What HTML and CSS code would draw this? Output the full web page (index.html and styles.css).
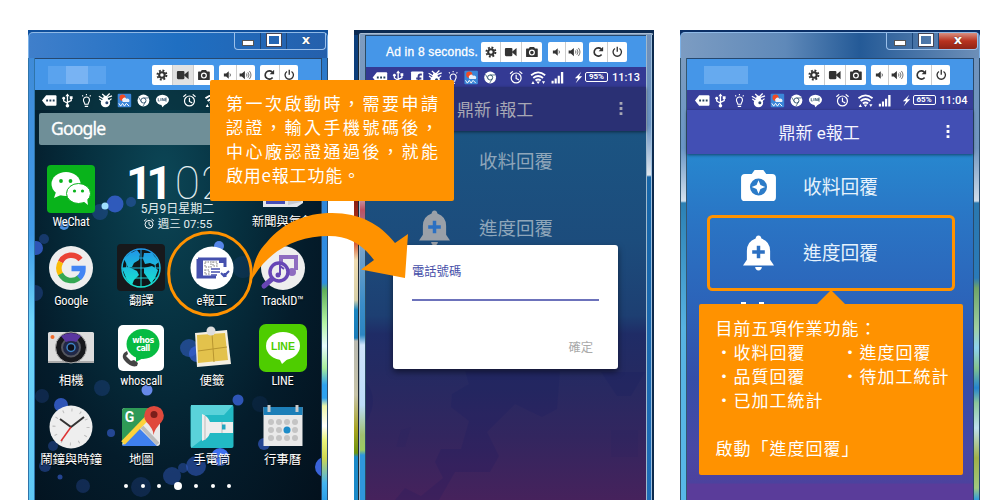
FILE: index.html
```
<!DOCTYPE html>
<html lang="zh-TW">
<head>
<meta charset="utf-8">
<title>e報工</title>
<link rel="stylesheet" href="styles.css">
</head>
<body>
<svg class="defs" width="0" height="0">
  <symbol id="gear" viewBox="0 0 16 16"><circle cx="8" cy="8" r="3.7" fill="none" stroke="#333" stroke-width="2.8"/><circle cx="8" cy="8" r="6" fill="none" stroke="#333" stroke-width="2.6" stroke-dasharray="2.5 2.21"/></symbol>
  <symbol id="video" viewBox="0 0 16 16"><rect x="0" y="2.500" width="10" height="11" rx="1.5" fill="#333"/><path d="M9 8l6.500-5.500v11z" fill="#333"/></symbol>
  <symbol id="cam" viewBox="0 0 16 16"><path d="M1 4h3.500l1-2h5l1 2H15v10H1z" fill="#333" stroke="#333" stroke-width="1.500" stroke-linejoin="round"/><circle cx="8" cy="8.800" r="3.200" fill="none" stroke="#fff" stroke-width="1.600"/></symbol>
  <symbol id="vol1" viewBox="0 0 16 16"><path d="M3 6h3l3.500-3v10L6 10H3z" fill="#333"/><path d="M11 6q1.600 2 0 4" fill="none" stroke="#555" stroke-width="1.200"/></symbol>
  <symbol id="vol2" viewBox="0 0 16 16"><path d="M0 6h3l4-3.500v11L3 10H0z" fill="#333"/><path d="M9 6q1.600 2 0 4M11 4.300q3 3.700 0 7.400M13 2.600q4.300 5.400 0 10.800" fill="none" stroke="#666" stroke-width="1.200"/></symbol>
  <symbol id="redo" viewBox="0 0 16 16"><path d="M12.500 11.300A5.500 5.500 0 1 1 12 4.200" fill="none" stroke="#333" stroke-width="2.200"/><path d="M14.500 1v6h-6z" fill="#333"/></symbol>
  <symbol id="power" viewBox="0 0 16 16"><path d="M5 3.300a5.600 5.600 0 1 0 6 0M8 1v6.500" fill="none" stroke="#333" stroke-width="1.800"/></symbol>

  <symbol id="msg" viewBox="0 0 16 16"><path d="M4.500 2.500h10q1 0 1 1v9q0 1-1 1h-10L0 8z" fill="#fff"/><path d="M4.500 7h2v2h-2zM8 7h2v2H8zM11.500 7h2v2h-2z" fill="#23405a"/></symbol>
  <symbol id="usb" viewBox="0 0 16 16"><path d="M8 2v11M8 11L4 8.500V5.500M8 10l4-2V5" fill="none" stroke="#fff" stroke-width="1.400"/><path d="M5.800 3.500L8 .5l2.200 3zM10.500 3.500h3v3h-3z" fill="#fff"/><circle cx="4" cy="5.500" r="1.500" fill="#fff"/><circle cx="8" cy="13.500" r="1.900" fill="#fff"/></symbol>
  <symbol id="bulb" viewBox="0 0 16 16"><path d="M6.300 12C6 10 4.800 9.500 4.800 7.500a3.200 3.200 0 0 1 6.400 0C11.200 9.500 10 10 9.700 12zM6.200 14.300h3.600M8 1v1.500M3.500 2.500l1 1M12.500 2.500l-1 1" fill="none" stroke="#fff" stroke-width="1.200"/></symbol>
  <symbol id="bug" viewBox="0 0 16 16"><ellipse cx="8" cy="10.500" rx="5" ry="4.700" fill="#fff"/><circle cx="8" cy="5.500" r="2.600" fill="#fff"/><path d="M1.500 6.500L5 9M14.500 6L11 9M1 3.500l5 3M4.500 1L8 4M12.500 .5L9 4M10 5l5-2" stroke="#fff" stroke-width="1.300"/><circle cx="9.500" cy="10.500" r="1.600" fill="#2c4671"/></symbol>
  <symbol id="wx" viewBox="0 0 16 16"><rect x=".8" y=".8" width="14.400" height="14.400" rx="1" fill="#3b86d8"/><circle cx="6" cy="5" r="3.300" fill="#f04b24"/><path d="M6 9a2.200 2.200 0 0 1 4-3 2.400 2.400 0 0 1 3 3.500H6z" fill="#e8effa"/><path d="M2 11l2 3 2-3 2 3 2-3 3 3" fill="none" stroke="#fff"/></symbol>
  <symbol id="chrome" viewBox="0 0 16 16"><circle cx="8" cy="8" r="6.300" fill="#fff"/><circle cx="8" cy="8" r="2.700" fill="none" stroke="#31536d" stroke-width="1"/><path d="M8 5.300h5.500M5.700 9.300L3 4.700M10.300 9.300L7.500 14" stroke="#31536d" stroke-width=".8"/></symbol>
  <symbol id="lin" viewBox="0 0 16 16"><ellipse cx="8" cy="7.300" rx="7" ry="5.500" fill="#fff"/><path d="M6.500 12l1.500 3.300 4-4.300z" fill="#fff"/><path d="M3.500 5.500v3H5M6.300 5.500v3M7.800 8.500v-3l2 3v-3M12.700 5.500H11v3h1.700M11 7h1.500" fill="none" stroke="#31536d" stroke-width=".8"/></symbol>
  <symbol id="fb" viewBox="0 0 16 16"><rect x="1.500" y="1.500" width="13" height="13" rx="1" fill="#fff"/><path d="M9.500 15V7q0-2.200 2-2.200h1.500M7 9h5.500" fill="none" stroke="#3a3c8c" stroke-width="2"/></symbol>
  <symbol id="alarm" viewBox="0 0 16 16"><circle cx="8" cy="8.500" r="5.300" fill="none" stroke="#fff" stroke-width="1.300"/><path d="M8 5v4l3 1.500M1.500 4l3-2.500M14.500 4l-3-2.500" fill="none" stroke="#fff" stroke-width="1.300"/></symbol>
  <symbol id="wifi" viewBox="0 0 16 16"><path d="M.5 5.500Q8-.5 15.500 5.500M2.800 8.500Q8 4.300 13.200 8.500M5.200 11.300Q8 9 10.800 11.300" fill="none" stroke="#fff" stroke-width="2"/><path d="M6 12.300h4l-2 2.500zM.8 14.800l1.700-3 1.700 3zM12 12h3.400l-1.700 3z" fill="#fff"/></symbol>
  <symbol id="sig" viewBox="0 0 16 16"><path d="M2 14.500v-3h2.300v3zM5.300 14.500V9h2.300v5.500zM8.600 14.500V6h2.300v8.500zM12 14.500V2h2.500v12.500z" fill="#fff"/></symbol>
  <symbol id="bolt" viewBox="0 0 16 16"><path d="M11.500 1L3.500 9H7.500l-3 6L12.500 6.500H8.500z" fill="#fff"/></symbol>
  <symbol id="dots" viewBox="0 0 4 16"><path d="M.5 1h3v3h-3zM.5 6.500h3v3h-3zM.5 12h3v3h-3z"/></symbol>
  <symbol id="bell" viewBox="0 0 32 36"><path d="M16 0q2.500 0 3 3Q28 6 28 16v9l4 6H0l4-6v-9Q4 6 13 3q.5-3 3-3z"/><path d="M12.500 32.500h7q-.5 3.500-3.500 3.500t-3.500-3.500z"/><path class="cut" d="M9.500 17h13M16 10.500v13" stroke-width="3.600"/></symbol>
  <symbol id="shot" viewBox="0 0 36 32"><path d="M4 4h7l3-4h9l3 4h6q4 0 4 4v20q0 4-4 4H4q-4 0-4-4V8q0-4 4-4z"/><circle class="cutfill" cx="18" cy="17.500" r="8.800"/><path d="M18 10.500l2 5 5 2-5 2-2 5-2-5-5-2 5-2z"/></symbol>
</svg>

<main class="stage">
  <section class="win win-home">
    <header class="titlebar"><div class="ctl"><i class="min"></i><i class="max"></i><i class="cls">x</i></div></header>
    <div class="edge edge-l"></div>
    <div class="screen home">
      <div class="toolbar"><div class="blurname"><i></i><i></i><i></i></div>
        <div class="grp g3"><svg><use href="#gear"/></svg><svg class="on"><use href="#video"/></svg><svg><use href="#cam"/></svg></div>
        <div class="grp g2"><svg><use href="#vol1"/></svg><svg><use href="#vol2"/></svg></div>
        <div class="grp g2 w"><svg><use href="#redo"/></svg><svg><use href="#power"/></svg></div>
      </div>
      <div class="launcher">
        <svg class="wall bokeh" viewBox="34 90 287 410" width="287" height="410">
          <g fill="#3a63d8">
            <circle cx="114" cy="204" r="8.500" opacity=".8"/><circle cx="99" cy="212" r="8" opacity=".3"/><circle cx="130" cy="202" r="5" opacity=".4"/><circle cx="104" cy="206" r="3.500" fill="#9fe0ff"/>
            <circle cx="63" cy="225" r="5" fill="#4a8fe0"/><circle cx="43" cy="239" r="5" opacity=".35"/><circle cx="35" cy="248" r="7" opacity=".8"/><circle cx="34" cy="293" r="8" opacity=".3"/><circle cx="218" cy="246" r="5" fill="#5585e8"/><circle cx="242" cy="267" r="11" opacity=".12"/>
            <circle cx="188" cy="348" r="9" opacity=".5"/><circle cx="196" cy="354" r="8" opacity=".7"/><circle cx="101" cy="388" r="8" opacity=".22"/><circle cx="146" cy="390" r="5.500" fill="#6688e8"/><circle cx="60" cy="405" r="7" opacity=".8"/><circle cx="41" cy="396" r="7" opacity=".2"/><circle cx="237" cy="400" r="5.500" opacity=".8"/><circle cx="259" cy="404" r="8" opacity=".1"/><circle cx="110" cy="433" r="4" opacity=".6"/><circle cx="52" cy="446" r="5" opacity=".35"/><circle cx="44" cy="466" r="6" opacity=".4"/>
            <circle cx="195" cy="466" r="10" opacity=".5"/><circle cx="182" cy="468" r="5" opacity=".4"/><circle cx="171" cy="476" r="9" opacity=".4"/><circle cx="82" cy="486" r="7" opacity=".25"/><circle cx="140" cy="487" r="10" opacity=".2"/><circle cx="219" cy="457" r="9" fill="#3f70f0"/><circle cx="263" cy="444" r="6" opacity=".6"/><circle cx="324" cy="467" r="10"/><circle cx="59" cy="477" r="2.500" opacity=".6"/>
          </g>
        </svg>
        <div class="status"><svg><use href="#msg"/></svg><svg><use href="#usb"/></svg><svg><use href="#bulb"/></svg><svg><use href="#bug"/></svg><svg><use href="#wx"/></svg><svg><use href="#chrome"/></svg><svg><use href="#lin"/></svg><svg class="al"><use href="#alarm"/></svg><svg class="wf"><use href="#wifi"/></svg></div>
        <div class="search">Google</div>
        <div class="apps">
          <div class="app"><svg viewBox="0 0 48 48"><rect width="48" height="48" rx="4" fill="#09b31b"/><ellipse cx="19" cy="19" rx="14.500" ry="12" fill="#fff"/><path d="M9 27l-2 6 7-3z" fill="#fff"/><ellipse cx="31.500" cy="28.500" rx="12" ry="10" fill="#fff" stroke="#09b31b"/><path d="M36 36l5 4-1-7z" fill="#fff"/><g fill="#09b31b"><circle cx="14" cy="16" r="1.900"/><circle cx="23.500" cy="16" r="1.900"/><circle cx="27.500" cy="26" r="1.600"/><circle cx="35.500" cy="26" r="1.600"/></g></svg><span>WeChat</span></div>
          <div class="clock"><div class="time"><b>11</b><i>02</i></div><p>5月9日星期二</p><p class="al2"><svg><use href="#alarm"/></svg>週三 07:55</p></div>
          <div class="app"><svg viewBox="0 0 48 48"><path d="M4 8h40v30l-6 4H4z" fill="#e4e6ea"/><path d="M7 8h19v31H7z" fill="#464fb5"/><path d="M29 31l13-3v9l-13 3z" fill="#c7cad2"/></svg><span>新聞與氣象</span></div>

          <div class="app"><svg viewBox="0 0 48 48"><circle cx="24" cy="24" r="22" fill="#eee"/><g fill="none" stroke-width="5.500"><path d="M33.500 15.500A12 12 0 0 0 13.500 18" stroke="#ea4335"/><path d="M13.700 18a12 12 0 0 0 0 12.500" stroke="#fbbc05"/><path d="M13.500 30a12 12 0 0 0 19 3.200" stroke="#34a853"/><path d="M32 34q4.200-4 4-9.500H24.500" stroke="#4285f4"/></g></svg><span>Google</span></div>
          <div class="app"><svg viewBox="0 0 48 48"><defs><linearGradient id="gl" x2="0" y2="1"><stop stop-color="#2196e8"/><stop offset="1" stop-color="#16e4d0"/></linearGradient></defs><rect width="48" height="47" rx="4" fill="#17181b"/><circle cx="24" cy="24" r="19" fill="#101719" stroke="url(#gl)" stroke-width="1.500"/><path d="M7 15l5-5 8-4 3 4-1 6-5 3-2 4-4 0zM5 24l7-1 8 4 2 4-5 5-2 5-5-5zM27 9l8 0 7 9-4 3-5-2-5 1-2-5zM27 24l8-2 6 4-3 8-4 5-4-6-3-4z" fill="url(#gl)"/><path d="M24 5v38M5 24h38M14 8q-9 16 0 32M34 8q9 16 0 32M8 14h32M8 34h32" fill="none" stroke="url(#gl)"/></svg><span>翻譯</span></div>
          <div class="app"><svg viewBox="0 0 48 48"><circle cx="24" cy="24" r="21.500" fill="#fff"/><path d="M10 15h27v8M37 29v4M10 15v18h18" fill="none" stroke="#4550ae" stroke-width="3"/><path d="M11 15h4v18h-4zM31 14h6v5h-6z" fill="#4550ae"/><path d="M17 18h6v5h-6zM25 18h4v4h-4zM17 26h4v4h-4z" fill="none" stroke="#aaa" stroke-width="1.500" stroke-dasharray="1.500 1"/><path d="M23 25h9M23 28h9M23 31h6" stroke="#4550ae" stroke-width="1.500"/><path d="M33 29l3 3 5-5" fill="none" stroke="#4550ae" stroke-width="2"/></svg><span>e報工</span></div>
          <div class="app"><svg viewBox="0 0 48 48"><circle cx="24" cy="24" r="22" fill="#eee"/><path d="M22 18v-5h15v13" fill="none" stroke="#8e6cc0" stroke-width="4"/><circle cx="33" cy="28" r="4" fill="#8e6cc0"/><circle cx="20" cy="28" r="9" fill="#eee" stroke="#6746b5" stroke-width="3.500"/><path d="M13 35l-8 7" stroke="#6746b5" stroke-width="5" stroke-linecap="round"/><path d="M21 31v-9l4 3" fill="none" stroke="#6746b5" stroke-width="2"/><circle cx="19" cy="31" r="2.500" fill="#6746b5"/></svg><span>TrackID™</span></div>

          <div class="app"><svg viewBox="0 0 48 48"><rect x="1" y="8" width="46" height="31" rx="1.500" fill="#ddd"/><rect x="1" y="37" width="46" height="2" fill="#aaa"/><circle cx="5.500" cy="13" r="2" fill="#f06a2a"/><circle cx="24" cy="23.500" r="15.500" fill="#17181c" stroke="#aaa"/><circle cx="24" cy="23.500" r="9" fill="#202746" stroke="#54565f" stroke-width="2"/><path d="M14 12q10-6 20 0l-5 6q-5-2-10 0z" fill="#5a36a0"/><circle cx="24" cy="23.500" r="4" fill="#0d101a" stroke="#3e83c4" stroke-width="1.500"/></svg><span>相機</span></div>
          <div class="app"><svg viewBox="0 0 48 48"><rect x="1" y="1" width="46" height="46" rx="5" fill="#fff"/><ellipse cx="26" cy="20" rx="16.500" ry="15" fill="#07bb42"/><path d="M19 31l0 7 9-5z" fill="#07bb42"/><path d="M7 29q-3 4 1 8 6 7 12 5l1-3-4-3-3 1-5-5 2-2-1-3z" fill="#444"/><text class="wc" x="26" y="19">whos</text><text class="wc" x="26" y="27">call</text></svg><span>whoscall</span></div>
          <div class="app"><svg viewBox="0 0 48 48"><path d="M7 9l32-3 4 34-34 3z" fill="#f4efe2"/><path d="M9 11l28-2 3 27-30 3z" fill="#e3c24c"/><path d="M24 10l2 28M10 27l29-4" stroke="#b99630"/><circle cx="23" cy="7" r="4.500" fill="#ddd"/></svg><span>便籤</span></div>
          <div class="app"><svg viewBox="0 0 48 48"><rect width="48" height="48" rx="7" fill="#4ecd00"/><ellipse cx="24" cy="22" rx="17" ry="14" fill="#fff"/><path d="M20 34l3 6 9-8z" fill="#fff"/><text class="ln" x="24" y="26">LINE</text></svg><span>LINE</span></div>

          <div class="app"><svg viewBox="0 0 48 48"><circle cx="24" cy="24" r="21.500" fill="#eee"/><circle cx="24" cy="24" r="17" fill="none" stroke="#bbb" stroke-width="3" stroke-dasharray="1 7.900"/><path d="M13 16l11 8 13-10" fill="none" stroke="#333" stroke-width="2"/><path d="M24 24L14 38" stroke="#d33" stroke-width="1.500"/></svg><span>鬧鐘與時鐘</span></div>
          <div class="app"><svg viewBox="0 0 48 48"><rect x="5" y="5" width="38" height="38" rx="3" fill="#eaeaea"/><path d="M5 41V8q0-3 3-3h25v8z" fill="#2f9a56"/><path d="M5 43L22 25l18 18z" fill="#3f80ee"/><path d="M6 40L33 12" stroke="#fdd23c" stroke-width="5"/><path d="M25 24l16 17" stroke="#bbb" stroke-width="4"/><path d="M36.500 32q0-6-7-13a9.800 9.800 0 1 1 15 0q-7 7-8 13z" fill="#e0493c"/><circle cx="37" cy="11.500" r="3.500" fill="#7b1e1a"/><text class="mg" x="12.500" y="19">G</text></svg><span>地圖</span></div>
          <div class="app"><svg viewBox="0 0 48 48"><rect x="2.500" y="2" width="43" height="43" rx="2" fill="#22b9c4"/><path d="M3 2l13 10v23L3 45zM16 12h20l9-10H3z" fill="#5ad2da"/><path d="M14 11q6 2 8 8h23v11H22q-2 6-8 8z" fill="#eee"/><path d="M17 13v24M34 19v11" stroke="#bbb"/><rect x="34" y="21.500" width="3.500" height="5" fill="#22a6c0"/></svg><span>手電筒</span></div>
          <div class="app"><svg viewBox="0 0 48 48"><rect x="4.500" y="4" width="39" height="39" fill="#e9e9e9"/><rect x="4.500" y="4" width="39" height="8" fill="#1d7fb8"/><path d="M10 2v7M38 2v7" stroke="#ccc" stroke-width="3"/><g fill="#c4c4c4"><circle cx="12" cy="19" r="3"/><circle cx="20" cy="19" r="3"/><circle cx="28" cy="19" r="3"/><circle cx="36" cy="19" r="3"/><circle cx="12" cy="27" r="3"/><circle cx="20" cy="27" r="3"/><circle cx="36" cy="27" r="3"/><circle cx="12" cy="35" r="3"/><circle cx="20" cy="35" r="3"/><circle cx="28" cy="35" r="3"/><circle cx="36" cy="35" r="3"/></g><circle cx="28" cy="27" r="3.500" fill="#1d8cc8"/></svg><span>行事曆</span></div>
        </div>
        <div class="pager"><i></i><i></i><i></i><i class="cur"></i><i></i><i></i><i></i></div>
      </div>
    </div>
    <div class="edge edge-r"></div>
  </section>

  <section class="win win-login">
    <header class="topline"></header>
    <div class="edge edge-l"></div>
    <div class="screen">
      <div class="toolbar"><div class="ad">Ad in 8 seconds.</div>
        <div class="grp g3"><svg><use href="#gear"/></svg><svg><use href="#video"/></svg><svg><use href="#cam"/></svg></div>
        <div class="grp g2"><svg><use href="#vol1"/></svg><svg><use href="#vol2"/></svg></div>
        <div class="grp g2 w"><svg><use href="#redo"/></svg><svg><use href="#power"/></svg></div>
      </div>
      <div class="status"><svg><use href="#msg"/></svg><svg><use href="#usb"/></svg><svg><use href="#fb"/></svg><svg><use href="#bug"/></svg><svg><use href="#bulb"/></svg><svg><use href="#wx"/></svg><svg><use href="#chrome"/></svg><svg class="al"><use href="#alarm"/></svg><svg class="wf"><use href="#wifi"/></svg><svg><use href="#sig"/></svg><svg class="bo"><use href="#bolt"/></svg><em>95%</em><time>11:13</time></div>
      <div class="appbar"><span>鼎新 i報工</span><svg><use href="#dots"/></svg></div>
      <div class="body">
        <svg class="wall" viewBox="365 131 281 369" width="281" height="369"><g fill="#0c1560" opacity=".14"><path d="M464 371h95l-3 38-15 8-27-13-28 28 12 24-9 16h-35l-16 28h-44l10-12 16 8 22-18-8-16 6-13h20l8-28-18-14 1-13 17-10z"/><path d="M600 372h44l-14 24h-14z"/><path d="M365 382q14 18 0 40z"/><path d="M610 430h27v27h-27zM400 430l10-3-6 20h-9z" opacity=".4"/></g></svg>
        <div class="row"><span class="ico"></span><span>收料回覆</span></div>
        <div class="row"><span class="ico"><svg class="bell"><use href="#bell"/></svg></span><span>進度回覆</span></div>
        <div class="dialog"><label>電話號碼</label><div class="line"></div><div class="ok">確定</div></div>
      </div>
    </div>
    <div class="edge edge-r"></div>
  </section>

  <section class="win win-menu">
    <header class="titlebar"><div class="ctl"><i class="min"></i><i class="max"></i><i class="cls">x</i></div></header>
    <div class="edge edge-l"></div>
    <div class="screen">
      <div class="toolbar"><div class="blurname"><i></i></div>
        <div class="grp g3"><svg><use href="#gear"/></svg><svg><use href="#video"/></svg><svg><use href="#cam"/></svg></div>
        <div class="grp g2"><svg><use href="#vol1"/></svg><svg><use href="#vol2"/></svg></div>
        <div class="grp g2 w"><svg><use href="#redo"/></svg><svg><use href="#power"/></svg></div>
      </div>
      <div class="status"><svg><use href="#msg"/></svg><svg><use href="#usb"/></svg><svg><use href="#bulb"/></svg><svg><use href="#bug"/></svg><svg><use href="#wx"/></svg><svg><use href="#chrome"/></svg><svg><use href="#lin"/></svg><svg class="al"><use href="#alarm"/></svg><svg class="wf"><use href="#wifi"/></svg><svg><use href="#sig"/></svg><svg class="bo"><use href="#bolt"/></svg><em>65%</em><time>11:04</time></div>
      <div class="appbar"><span>鼎新 e報工</span><svg><use href="#dots"/></svg></div>
      <div class="body">
        <div class="row"><span class="ico"><svg class="shot"><use href="#shot"/></svg></span><span>收料回覆</span></div>
        <div class="row"><span class="ico"><svg class="bell"><use href="#bell"/></svg></span><span>進度回覆</span></div>
        <div class="row peek"><span class="ico"><i></i><i></i></span></div>
      </div>
    </div>
    <div class="edge edge-r"></div>
  </section>

  <svg class="marks" viewBox="0 0 1000 500" width="1000" height="500">
    <circle cx="210" cy="273.700" r="41.300" fill="none" stroke="#ff9200" stroke-width="3"/>
    <path d="M251.500 280C253 262 258 251 267 242C283 223 305 213 332 213C360 213 380 224 395 243L408 234L405 278L361 269.500L374 260C362 244 348 236 329 236C296 236 269 250 251.500 280z" fill="#ff9200"/>
    <rect x="708.500" y="216.500" width="245" height="73" rx="4" fill="none" stroke="#ff9200" stroke-width="3"/>
    <path d="M831 290l14 14h-28z" fill="#ff9200"/>
  </svg>
  <aside class="note note-auth"><p>第一次啟動時，需要申請</p><p>認證，輸入手機號碼後，</p><p>中心廠認證通過後，就能</p><p class="last">啟用e報工功能。</p></aside>
  <aside class="note note-list"><p>目前五項作業功能：</p><div class="cols"><p>・收料回覆</p><p>・進度回覆</p><p>・品質回覆</p><p>・待加工統計</p><p>・已加工統計</p></div><p class="go">啟動「進度回覆」</p></aside>
</main>
</body>
</html>
```
FILE: styles.css
```
* { box-sizing: border-box; margin: 0; padding: 0; }
body { width: 1000px; height: 500px; overflow: hidden; background: #fff; font-family: Roboto, "Noto Sans CJK TC", sans-serif; }
i, em { font-style: normal; }
.defs { position: absolute; }
.stage { position: relative; width: 1000px; height: 500px; overflow: hidden; display: flex; gap: 26px; padding: 30px 0 0 28px; }

/* desktop window frames */
.win { width: 300px; height: 470px; display: grid; grid-template-columns: 7px 1fr 7px; grid-template-rows: 28px 1fr; background: #0f4f9c; flex: none; }
.titlebar { grid-column: 1 / 4; border: 1px solid #7db2e8; border-top-color: #8fb9e6; border-bottom: 0; border-radius: 5px 5px 0 0; margin-top: 2px; display: flex; justify-content: flex-end; background: linear-gradient(90deg, #3f7fcb, #1f6fc2 50%, #2560ac); }
.win-menu { grid-template-columns: 7px 286px 7px; background: #0b2f66; }
.win-menu .titlebar { background: linear-gradient(90deg, #7c9cc2, #5f89b9 35%, #245a97 60%, #6d8fb8); }
.ctl { display: flex; width: 92px; height: 17px; margin-right: 1px; border: 1px solid #9cc0ea; border-top: 0; border-radius: 0 0 4px 4px; overflow: hidden; }
.ctl i { flex: 0 0 26px; display: flex; align-items: center; justify-content: center; border-right: 1px solid #1c4679; }
.ctl .cls { flex: 1; border: 0; color: #fff; font: bold 13px/14px "DejaVu Sans", sans-serif; padding-bottom: 2px; text-shadow: 0 0 1px #222; }
.win-menu .cls { background: linear-gradient(#d98f80, #b8321f 50%, #8e2418); }
.min::before { content: ""; width: 10px; height: 4px; background: #fff; border: 1px solid #555; margin-top: 3px; }
.max::before { content: ""; width: 10px; height: 8px; border: 2px solid #fff; outline: 1px solid #445; margin-bottom: 2px; }
.screen { min-width: 0; height: 442px; display: flex; flex-direction: column; border-top: 1px solid #26486f; }
.edge { border: solid #2a4a6b; border-width: 0 1px; }
.win-home .edge-l { background: linear-gradient(#3f8bd8, #3f9ae8 40%, #6fd6fb 60%, #5fc8f5); border-color: #2f74a9; }
.win-home .edge-r { background: linear-gradient(#2b78c8, #2f8fe6 50%, #2f8fe0 225px, #5faf5a 232px, #b5f5a5 265px, #e8fbff 288px, #a9ee9c 310px, #2ea2f0 327px, #2ea2f0 340px, #eff7a8 348px, #fff 368px, #eaf57c 382px, #d0d850 400px, #45b4ef 425px, #2c9fe8); }

.win-login { grid-template-columns: 12px 280px 8px; grid-template-rows: 5px 1fr; background: #0b2a52; }
.topline { grid-column: 1 / 4; margin: 3px 1px 0 5px; background: #7f9cbd; border: 1px solid #a9bdd4; border-bottom: 0; border-radius: 4px 4px 0 0; }
.win-login .screen { height: 465px; }
.win-login .edge-l { border: 0; background: linear-gradient(90deg, transparent 4px, #1c2733 4px, #1c2733 5px, #a8bccf 5px, #a8bccf 6px, transparent 6px, transparent 11px, #2b4a63 11px), linear-gradient(#7e9cc0, #6890bd 120px, #c8d8e8 155px, #c05060 175px, #7aa5cc 210px, #3a8cc8 270px, #2c86c2 300px, #d0e4fb 310px, #bcdcf8 370px, #a0c070 400px, #9ccb60 415px, #2f97dc 420px) 6px 0 / 6px 100% no-repeat, linear-gradient(#0c3f7c, #0b3a78 145px, #7c1a14 160px, #d0401c 205px, #f0dcb0 225px, #d8d0a8 265px, #1b86c0 275px, #1b7cb8 303px, #b9b9b0 306px, #c8c4a8 360px, #a8a420 395px, #6c9410 418px, #1b8ac8 422px); }
.win-login .edge-r { border-left: 1px solid #9fb8cc; border-right: 2px solid #0c2a4e; background: linear-gradient(#6f8fb8, #6a93c2 90px, #dfe6ee 140px, #1766a8 142px, #1f6cb8); box-shadow: inset -1px 0 #9fc0de; }
.win-menu .edge-l { background: linear-gradient(#7c9cc0, #6996c6 90px, #d5e2ee 143px, #2b80b4 145px, #57b3e2 270px, #57b8e8); border-color: #355770; }
.win-menu .edge-r { background: linear-gradient(#6f93bd, #7196c0 90px, #cfdcea 143px, #2a78b0 145px, #2a7ab8 220px, #6fa468 230px, #a0cfa0 270px, #8fd2ee 290px, #83c48e 310px, #2484d0 330px, #8cc69a 345px, #bfe0ee 370px, #a0b048 400px, #a0c880 430px, #2d9be0); }

/* emulator toolbar */
.toolbar { flex: 0 0 31px; display: flex; gap: 5.500px; align-items: center; background: #4596e8; }
.grp { display: flex; height: 20px; background: #fff; border-radius: 2px; }
.g3 { width: 61.500px; }
.g2 { width: 35.500px; }
.g2.w { width: 38px; }
.grp svg { flex: 1; min-width: 0; height: 20px; padding: 4px 2px; border-right: 1px solid #ccc; }
.grp svg:last-child { border: 0; }
.grp svg.on { background: #e2e2e2; }
.blurname { display: flex; height: 18px; margin-left: 13px; width: 98.500px; }
.blurname i { width: 18px; background: #5aa3ee; }
.blurname i:nth-child(2) { width: 22px; background: #78b3f3; }
.win-menu .blurname { margin-left: 17px; width: 94.500px; }
.win-menu .blurname i { width: 44px; background: #66aaef; }
.ad { width: 109px; padding-left: 20px; color: #fff; font: 12px/16px "Liberation Sans", sans-serif; white-space: nowrap; letter-spacing: .2px; -webkit-text-stroke: .3px #fff; }

.status { flex: 0 0 20px; display: flex; align-items: center; padding-left: 5.500px; background: #373f9b; color: #fff; }
.status svg { flex: none; width: 18.900px; height: 15px; }
.status .al { margin-left: 8px; }
.status .wf { margin-left: 4px; width: 19px; }
.status .bo { width: 13px; margin-left: 6px; }
.status em { width: 23px; height: 10px; border: 1px solid #fff; border-radius: 2px; font-size: 8px; font-weight: bold; line-height: 8px; text-align: center; }
.status time { margin-left: 4px; font-size: 11px; font-weight: 500; }
.win-login .status { background: #343a94; padding-left: 5px; }
.win-login .status svg { width: 18.300px; }
.win-login .status .bo { width: 13px; }

/* phone home screen */
.launcher { position: relative; flex: 1; display: flex; flex-direction: column; background: radial-gradient(ellipse at 45% 22%, #0c4656 0, #06303f 35%, #041c2b 65%, #03111d 100%); overflow: hidden; }
.wall { position: absolute; inset: 0; }
.bokeh { filter: blur(.7px); }
.launcher .status { position: relative; background: rgba(10, 50, 62, .6); padding-left: 4.500px; }
.search { position: relative; margin: 3px 4px 0; height: 32px; background: #6f8f98; border-radius: 2px; color: #fff; font: 17.500px/30px "Noto Sans", sans-serif; padding-left: 12px; flex: none; letter-spacing: -.8px; -webkit-text-stroke: .3px #fff; }
.apps { position: relative; display: grid; grid-template-columns: 70px 70.500px 70.500px 71px; grid-auto-rows: 79.300px; margin: 20px 0 0 1px; }
.app { display: flex; flex-direction: column; align-items: center; }
.app svg { width: 48px; height: 48px; flex: none; }
.app span { font: 12.500px/18px "Roboto Condensed", Roboto, "Noto Sans CJK TC", sans-serif; color: #fff; white-space: nowrap; text-shadow: 0 1px 1px #000; letter-spacing: -.2px; }
.wc { font: bold 8px "DejaVu Sans", sans-serif; fill: #fff; text-anchor: middle; letter-spacing: -.5px; }
.ln { font: bold 10.500px "Liberation Sans", sans-serif; fill: #4ecd00; text-anchor: middle; }
.mg { font: bold 14px Roboto, sans-serif; fill: #fff; text-anchor: middle; }
.clock { grid-column: span 2; color: #e4eef0; text-align: center; }
.time { height: 37px; line-height: 37px; font-size: 46px; white-space: nowrap; }
.time b { font-weight: 700; letter-spacing: -6px; color: #fff; }
.time i { font-weight: 100; margin-left: 8px; letter-spacing: 1px; }
.clock p { font-size: 12px; line-height: 14.500px; padding-left: 2px; }
.clock .al2 { display: flex; justify-content: center; align-items: center; gap: 3px; font-size: 11.500px; }
.al2 svg { width: 12px; height: 12px; }
.pager { position: relative; display: flex; justify-content: space-between; align-items: center; width: 107px; height: 8px; margin: 0 0 0 89px; }
.pager i { width: 4px; height: 4px; border-radius: 50%; background: #fff; }
.pager .cur { width: 8px; height: 8px; }

/* phone application */
.appbar { position: relative; z-index: 1; flex: 0 0 44px; display: flex; align-items: center; justify-content: space-between; padding: 0 23px 2px 91.500px; background: #424fb4; color: #f5f5ff; font-size: 17px; box-shadow: 0 1px 3px rgba(0, 0, 0, .5); }
.appbar svg { width: 4px; height: 15px; fill: #fff; }
.body { position: relative; flex: 1; background: linear-gradient(#2787cf, #2a74c4 20%, #2c62b8 45%, #344ea8 65%, #4848a4 85%, #4c429e 95%, #5a3c9a 95.500%); overflow: hidden; }
.row { position: relative; height: 66.500px; display: flex; align-items: center; color: #e6f2fc; font-size: 18.800px; }
.row:nth-of-type(1) { margin-top: -2px; }
.ico { width: 116px; padding-left: 54px; display: flex; flex: none; }
.ico svg { fill: #fff; display: block; }
.shot { width: 35px; height: 31px; }
.bell { width: 31px; height: 36px; margin: 3px 0 0 2px; }
.cut { stroke: #2c70c2; }
.cutfill { fill: #2b7bc8; }
.peek { align-items: flex-start; padding-top: 17px; }
.peek i { width: 5px; height: 8px; background: #fff; margin-right: 13px; }

.win-login .appbar { background: #2a3074; color: #a7a7b4; padding-left: 91px; }
.win-login .appbar svg { fill: #a7a7b4; }
.win-login .body { background: linear-gradient(#1b5482, #1c4c7c 30%, #1d3f72 50%, #1f2c66 55%, #242a62 65%, #33265f 83%, #46225c 100%); }
.win-login .row { color: #8fa6ba; font-size: 18.500px; }
.win-login .row:nth-of-type(1) { margin-top: -4px; }
.win-login .ico { width: 113px; }
.win-login .bell { margin: 2px 0 0 -1px; fill: #9aa0a8; }
.win-login .cut { stroke: #1c4c7c; }
.dialog { position: absolute; left: 27px; top: 114px; width: 225px; height: 124px; background: #fff; border-radius: 3px; box-shadow: 0 3px 6px rgba(0, 0, 0, .5); padding: 18px 19px 8px; display: flex; flex-direction: column; font-size: 12.300px; line-height: 18px; color: #454ea8; }
.line { flex: none; height: 2px; background: #6c72bb; margin-top: 18px; }
.ok { color: #aaa; margin: 38px 6px 0 0; text-align: right; }

/* annotations */
.marks { position: absolute; left: 0; top: 0; z-index: 2; }
.note { position: absolute; z-index: 3; background: #ff9200; border-radius: 2px; color: #fff; font-family: "Noto Sans CJK TC", sans-serif; font-size: 17px; line-height: 24px; white-space: nowrap; }
.note-auth { left: 210px; top: 80px; width: 244px; height: 121px; padding: 11px 0 0 16px; letter-spacing: 2.500px; }
.note-auth .last { letter-spacing: .8px; }
.note-list { left: 699px; top: 304px; width: 264px; height: 171px; padding: 12px 0 0 16.500px; letter-spacing: 1px; }
.cols { display: grid; grid-template-columns: 126px 1fr; }
.go { margin-top: 24px; }
```
